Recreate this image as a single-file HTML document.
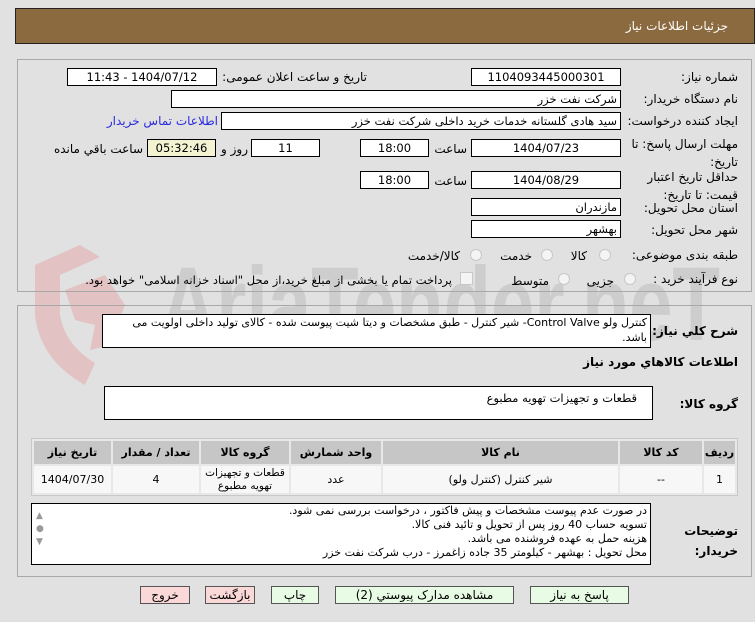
<!DOCTYPE html>
<html><head><meta charset="utf-8"><style>
*{box-sizing:border-box;margin:0;padding:0}
body{width:755px;height:622px;background:#e1e1e1;font-family:"DejaVu Sans","Liberation Sans",sans-serif;font-size:11.5px;color:#000;position:relative;overflow:hidden}
.a{position:absolute;white-space:nowrap}
.box{position:absolute;background:#fff;border:1px solid #000;direction:rtl;padding:0 3px;line-height:16px;font-size:11.5px;overflow:hidden}
.c{text-align:center}
.lbl{position:absolute;direction:rtl;text-align:right;white-space:nowrap;font-size:12px}
.panel{position:absolute;border:1px solid #a8a8a8}
.rad{position:absolute;width:12px;height:12px;border-radius:50%;border:1px solid #c8c8c8;background:#f4f4f4}
.btn{position:absolute;top:586px;height:18px;border:1px solid #555;text-align:center;line-height:16px;font-size:12px;direction:rtl}
.g{background:#e8fbe4}.p{background:#fbd8d8}
table{position:absolute;border-collapse:separate;border-spacing:2px;background:#e8e8e8;border:1px solid #c8c8c8;direction:rtl;table-layout:fixed}
th{background:#c6c6c6;height:23px;font-size:11px}
td{background:#f7f7f7;height:27px;text-align:center;font-size:11px;line-height:13px;overflow:hidden}
</style></head><body>
<!-- watermark -->
<svg class="a" style="left:20px;top:245px;opacity:.55" width="730" height="150">
<path d="M60 0 L15 20 L15 70 Q20 115 65 140 L75 118 Q45 100 40 70 L40 30 L80 12 Z" fill="#e3a9a9"/>
<path d="M45 45 L85 30 L105 60 L90 100 L70 105 L75 80 L55 75 Z" fill="#e3a9a9"/>
<text x="140" y="95" font-family="Liberation Sans" font-weight="bold" font-size="105" fill="#bdbdbd" textLength="560" lengthAdjust="spacingAndGlyphs">AriaTender.neT</text>
</svg>
<div class="a" style="left:15px;top:8px;width:740px;height:36px;background:#8c6a3f;border:1px solid #222"></div>
<div class="lbl" style="right:27px;top:19px;color:#fff">جزئیات اطلاعات نیاز</div>

<div class="panel" style="left:17px;top:59px;width:735px;height:233px"></div>
<div class="panel" style="left:17px;top:305px;width:735px;height:272px"></div>

<div class="lbl" style="right:17px;top:70px">شماره نیاز:</div>
<div class="box c" style="left:471px;top:68px;width:150px;height:18px">1104093445000301</div>
<div class="lbl" style="right:388px;top:70px">تاریخ و ساعت اعلان عمومی:</div>
<div class="box c" style="left:67px;top:68px;width:150px;height:18px">1404/07/12 - 11:43</div>

<div class="lbl" style="right:17px;top:92px">نام دستگاه خریدار:</div>
<div class="box" style="left:171px;top:90px;width:450px;height:18px">شرکت نفت خزر</div>

<div class="lbl" style="right:17px;top:114px">ایجاد کننده درخواست:</div>
<div class="box" style="left:221px;top:112px;width:400px;height:18px">سید هادی گلستانه خدمات خرید داخلی شرکت نفت خزر</div>
<div class="lbl" style="right:537px;top:114px;color:#2a2ae0">اطلاعات تماس خریدار</div>

<div class="lbl" style="right:17px;top:135px;line-height:18px">مهلت ارسال پاسخ: تا<br>تاریخ:</div>
<div class="box c" style="left:471px;top:139px;width:150px;height:18px">1404/07/23</div>
<div class="lbl" style="right:288px;top:142px">ساعت</div>
<div class="box c" style="left:360px;top:139px;width:69px;height:18px">18:00</div>
<div class="box c" style="left:251px;top:139px;width:69px;height:18px">11</div>
<div class="lbl" style="right:507px;top:142px">روز و</div>
<div class="box c" style="left:147px;top:139px;width:69px;height:18px;background:#f3f3d2">05:32:46</div>
<div class="lbl" style="right:612px;top:142px">ساعت باقي مانده</div>

<div class="lbl" style="right:17px;top:168px;line-height:18px">حداقل تاریخ اعتبار<br>قیمت: تا تاریخ:</div>
<div class="box c" style="left:471px;top:171px;width:150px;height:18px">1404/08/29</div>
<div class="lbl" style="right:288px;top:174px">ساعت</div>
<div class="box c" style="left:360px;top:171px;width:69px;height:18px">18:00</div>

<div class="lbl" style="right:17px;top:201px">استان محل تحویل:</div>
<div class="box" style="left:471px;top:198px;width:150px;height:18px">مازندران</div>
<div class="lbl" style="right:17px;top:223px">شهر محل تحویل:</div>
<div class="box" style="left:471px;top:220px;width:150px;height:18px">بهشهر</div>

<div class="lbl" style="right:17px;top:248px">طبقه بندی موضوعی:</div>
<div class="rad" style="left:599px;top:249px"></div><div class="lbl" style="right:168px;top:249px">کالا</div>
<div class="rad" style="left:541px;top:249px"></div><div class="lbl" style="right:223px;top:249px">خدمت</div>
<div class="rad" style="left:470px;top:249px"></div><div class="lbl" style="right:295px;top:249px">کالا/خدمت</div>

<div class="lbl" style="right:17px;top:272px">نوع فرآیند خرید :</div>
<div class="rad" style="left:624px;top:273px"></div><div class="lbl" style="right:141px;top:274px">جزیی</div>
<div class="rad" style="left:558px;top:273px"></div><div class="lbl" style="right:206px;top:274px">متوسط</div>
<div class="a" style="left:460px;top:272px;width:13px;height:13px;border:1px solid #c8c8c8;background:#f4f4f4"></div>
<div class="lbl" style="right:303px;top:273px;font-size:11.5px">پرداخت تمام یا بخشی از مبلغ خرید،از محل "اسناد خزانه اسلامی" خواهد بود.</div>

<div class="lbl" style="right:17px;top:324px;font-weight:bold">شرح کلي نیاز:</div>
<div class="box" style="left:102px;top:314px;width:549px;height:34px;line-height:15px;white-space:normal;font-size:11px">کنترل ولو Control Valve- شیر کنترل - طبق مشخصات و دیتا شیت پیوست شده - کالای تولید داخلی اولویت می باشد.</div>
<div class="lbl" style="right:17px;top:355px;font-weight:bold">اطلاعات کالاهاي مورد نیاز</div>

<div class="lbl" style="right:17px;top:397px;font-weight:bold">گروه کالا:</div>
<div class="box" style="left:104px;top:386px;width:549px;height:34px;padding-right:15px;padding-top:3px">قطعات و تجهیزات تهویه مطبوع</div>

<table style="left:31px;top:438px;width:707px;height:58px">
<colgroup><col style="width:31px"><col style="width:82px"><col style="width:235px"><col style="width:90px"><col style="width:88px"><col style="width:86px"><col></colgroup>
<tr><th>ردیف</th><th>کد کالا</th><th>نام کالا</th><th>واحد شمارش</th><th>گروه کالا</th><th>تعداد / مقدار</th><th>تاریخ نیاز</th></tr>
<tr><td>1</td><td>--</td><td>شیر کنترل (کنترل ولو)</td><td>عدد</td><td style="font-size:10.5px;white-space:nowrap">قطعات و تجهیزات<br>تهویه مطبوع</td><td>4</td><td>1404/07/30</td></tr>
</table>

<div class="lbl" style="right:17px;top:521px;font-weight:bold;line-height:20px">توضیحات<br>خریدار:</div>
<div class="box" style="left:31px;top:503px;width:620px;height:62px;line-height:14px;padding-right:3px;font-size:11px">در صورت عدم پیوست مشخصات و پیش فاکتور ، درخواست بررسی نمی شود.<br>تسویه حساب 40 روز پس از تحویل و تائید فنی کالا.<br>هزینه حمل به عهده فروشنده می باشد.<br>محل تحویل : بهشهر - کیلومتر 35 جاده زاغمرز - درب شرکت نفت خزر</div>
<div class="a" style="left:36px;top:510px;color:#999;font-size:9px;line-height:13px">▲<br>●<br>▼</div>

<div class="btn p" style="left:140px;width:50px">خروج</div>
<div class="btn p" style="left:205px;width:50px">بازگشت</div>
<div class="btn g" style="left:271px;width:48px">چاپ</div>
<div class="btn g" style="left:335px;width:179px">مشاهده مدارک پیوستي (2)</div>
<div class="btn g" style="left:530px;width:99px">پاسخ به نیاز</div>
</body></html>
